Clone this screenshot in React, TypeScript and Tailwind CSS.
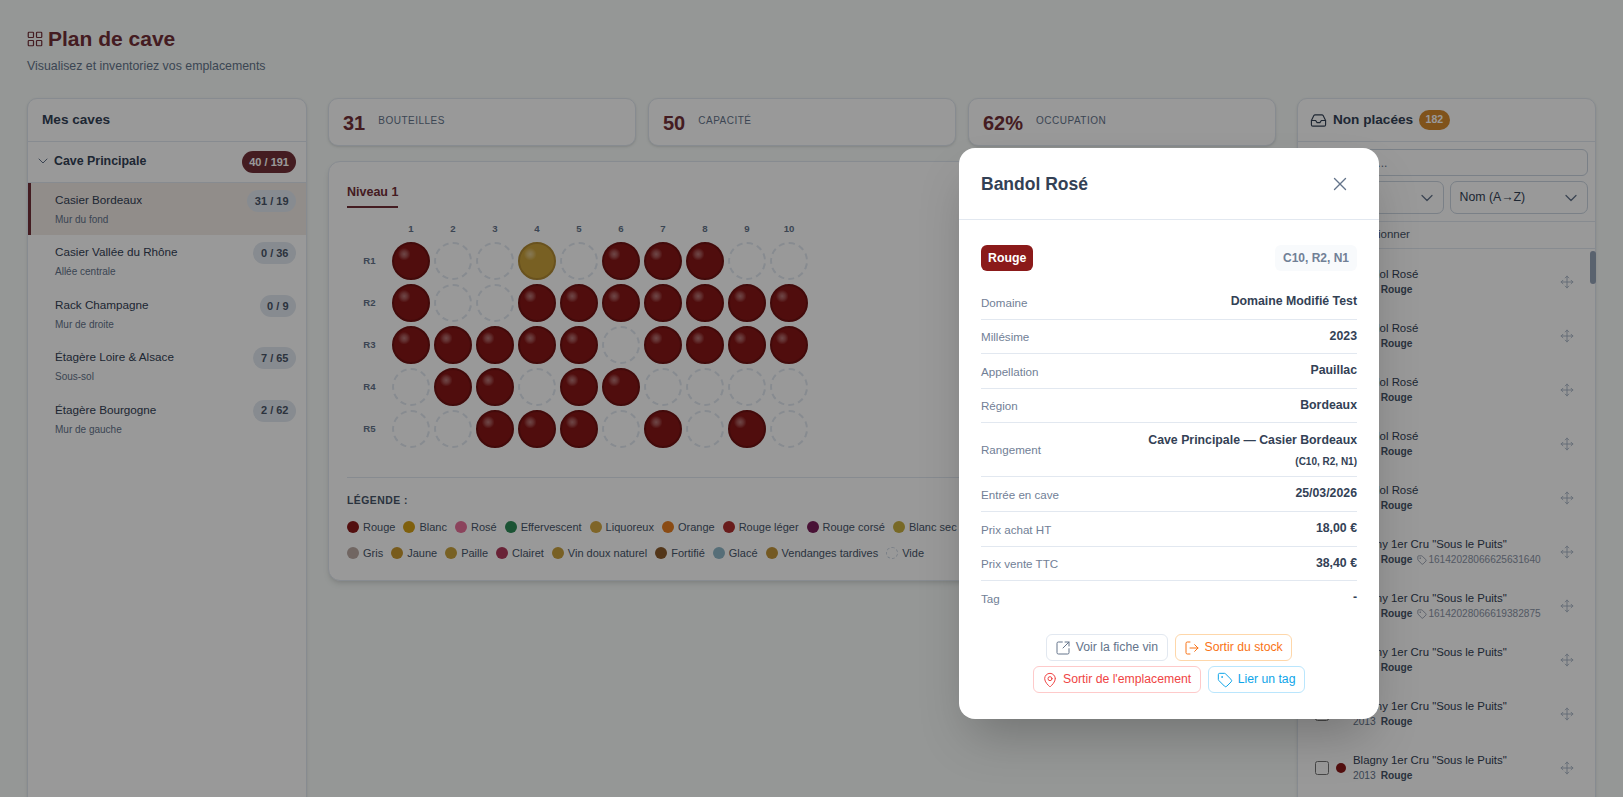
import {
  ChevronDown,
  Inbox,
  LayoutGrid,
  LogOut,
  MapPin,
  Move,
  SquareArrowOutUpRight,
  Tag,
  X,
} from "lucide-react";

const racks = [
  { name: "Casier Bordeaux", place: "Mur du fond", count: "31 / 19", active: true },
  { name: "Casier Vallée du Rhône", place: "Allée centrale", count: "0 / 36" },
  { name: "Rack Champagne", place: "Mur de droite", count: "0 / 9" },
  { name: "Étagère Loire & Alsace", place: "Sous-sol", count: "7 / 65" },
  { name: "Étagère Bourgogne", place: "Mur de gauche", count: "2 / 62" },
];

const rows = ["X..G.XXX..", "X..XXXXXXX", "XXXXX.XXXX", ".XX.XX....", "..XXX.X.X."];

const legendOne = [
  { label: "Rouge", color: "bg-[#8b1a1a]" },
  { label: "Blanc", color: "bg-[#d4a017]" },
  { label: "Rosé", color: "bg-[#e8709a]" },
  { label: "Effervescent", color: "bg-[#2e8b57]" },
  { label: "Liquoreux", color: "bg-[#d4a843]" },
  { label: "Orange", color: "bg-[#e67e22]" },
  { label: "Rouge léger", color: "bg-[#b03030]" },
  { label: "Rouge corsé", color: "bg-[#7b1e5a]" },
  { label: "Blanc sec", color: "bg-[#c8b040]" },
];

const legendTwo = [
  { label: "Gris", color: "bg-[#bcaaa4]" },
  { label: "Jaune", color: "bg-[#c9982f]" },
  { label: "Paille", color: "bg-[#c9a23c]" },
  { label: "Clairet", color: "bg-[#b03a5b]" },
  { label: "Vin doux naturel", color: "bg-[#c9a03c]" },
  { label: "Fortifié", color: "bg-[#8b5a2b]" },
  { label: "Glacé", color: "bg-[#8fb8c8]" },
  { label: "Vendanges tardives", color: "bg-[#c2953a]" },
];

const details = [
  { label: "Domaine", value: "Domaine Modifié Test" },
  { label: "Millésime", value: "2023" },
  { label: "Appellation", value: "Pauillac" },
  { label: "Région", value: "Bordeaux" },
];

const prices = [
  { label: "Entrée en cave", value: "25/03/2026" },
  { label: "Prix achat HT", value: "18,00 €" },
  { label: "Prix vente TTC", value: "38,40 €" },
];

const bottles = [
  { name: "Bandol Rosé", year: "2023" },
  { name: "Bandol Rosé", year: "2023" },
  { name: "Bandol Rosé", year: "2023" },
  { name: "Bandol Rosé", year: "2023" },
  { name: "Bandol Rosé", year: "2023" },
  { name: 'Blagny 1er Cru "Sous le Puits"', year: "2013", tag: "16142028066625631640" },
  { name: 'Blagny 1er Cru "Sous le Puits"', year: "2013", tag: "16142028066619382875" },
  { name: 'Blagny 1er Cru "Sous le Puits"', year: "2013" },
  { name: 'Blagny 1er Cru "Sous le Puits"', year: "2013" },
  { name: 'Blagny 1er Cru "Sous le Puits"', year: "2013" },
];

function Stat({ value, label }: { value: string; label: string }) {
  return (
    <div className="flex-1 h-[48px] bg-white border border-[#e2e8f0] rounded-[10px] shadow-sm flex items-center gap-[13px] px-[14px]">
      <span className="pt-[1px] text-[20px] font-bold text-[#722f37]">{value}</span>
      <span className="text-[10px] tracking-[0.5px] uppercase text-[#64748b] -mt-[3px]">{label}</span>
    </div>
  );
}

function Cell({ kind }: { kind: string }) {
  if (kind === ".") {
    return <div className="w-[38px] h-[38px] rounded-full border-2 border-dashed border-[#e2e8f0]" />;
  }
  const color = kind === "G" ? "bg-[#c9a13b] border-[#af8932]" : "bg-[#851616] border-[#6e1212]";
  return (
    <div
      className={`w-[38px] h-[38px] rounded-full border-2 ${color} bg-[radial-gradient(circle_at_30%_30%,rgba(255,255,255,0.42)_0%,rgba(255,255,255,0.26)_9%,rgba(255,255,255,0)_19%)]`}
    />
  );
}

function LegendRow({ items, empty }: { items: { label: string; color: string }[]; empty?: boolean }) {
  return (
    <div className="flex items-center gap-2 h-[26px] whitespace-nowrap">
      {items.map((item) => (
        <span key={item.label} className="flex items-center gap-1 text-[11px] text-[#475569]">
          <span className={`w-3 h-3 rounded-full ${item.color}`} />
          {item.label}
        </span>
      ))}
      {empty && (
        <span className="flex items-center gap-1 text-[11px] text-[#475569]">
          <span className="w-3 h-3 rounded-full border border-dashed border-[#cbd5e1]" />
          Vide
        </span>
      )}
    </div>
  );
}

function Row({ label, value }: { label: string; value: string }) {
  return (
    <div className="h-[34.6px] flex items-center justify-between border-b border-[#e2e8f0]">
      <span className="text-[11.6px] text-[#718096] pt-[1px]">{label}</span>
      <span className="pb-[1px] text-[12.32px] font-bold text-[#334155]">{value}</span>
    </div>
  );
}

function ModalButton({ className, icon, label }: { className: string; icon: React.ReactNode; label: string }) {
  return (
    <button className={`h-[27px] flex items-center gap-[5px] pl-[8px] pr-[8.5px] border rounded-[6px] text-[12.24px] ${className}`}>
      {icon}
      {label}
    </button>
  );
}

export default function App() {
  return (
    <div className="relative h-screen overflow-hidden bg-[#f8fcfa] font-['Liberation_Sans',Arial,sans-serif]">
      <div className="px-[27px] pt-[26px]">
        <div className="flex items-center gap-[4.5px]">
          <LayoutGrid size={18} strokeWidth={1.6} className="-ml-[1.5px] text-[#722f37]" />
          <h1 className="text-[21px] leading-[26px] font-bold text-[#722f37]">Plan de cave</h1>
        </div>
        <p className="mt-[7px] text-[12.35px] leading-[15px] text-[#64748b]">Visualisez et inventoriez vos emplacements</p>

        <div className="mt-[24px] grid grid-cols-[280px_1fr_299px] gap-[21px]">
          {/* caves */}
          <aside className="h-[760px] bg-white border border-[#e2e8f0] rounded-[10px] shadow-sm">
            <div className="h-[43px] flex items-center px-[14px] border-b border-[#e2e8f0]">
              <h2 className="pt-[1px] text-[13.6px] font-bold text-[#334155]">Mes caves</h2>
            </div>
            <div className="h-[41px] flex items-center justify-between pl-[7px] pr-[10px] border-b border-[#e2e8f0]">
              <div className="flex items-center gap-[3px] -mt-[1px]">
                <ChevronDown size={16} strokeWidth={1.5} className="text-[#64748b]" />
                <span className="text-[12.4px] font-bold text-[#334155]">Cave Principale</span>
              </div>
              <span className="h-[22px] px-[7px] flex items-center rounded-full bg-[#722f37] text-white text-[11px] font-bold">40 / 191</span>
            </div>
            {racks.map((rack) => (
              <div
                key={rack.name}
                className={`h-[52.4px] flex justify-between pr-[10px] pt-[7px] border-l-[3px] ${rack.active ? "border-[#722f37] bg-[#f2ebe7]" : "border-transparent"}`}
              >
                <div className="pl-[24px] pt-[2px]">
                  <div className="text-[11.7px] leading-[16px] text-[#334155]">{rack.name}</div>
                  <div className="mt-[6px] text-[10px] leading-[12px] text-[#64748b]">{rack.place}</div>
                </div>
                <span className="h-[22px] px-[7.5px] flex items-center rounded-full bg-[#e2e8f0] text-[#4a5568] text-[11px] font-bold">{rack.count}</span>
              </div>
            ))}
          </aside>

          {/* plan */}
          <main>
            <div className="flex gap-3">
              <Stat value="31" label="Bouteilles" />
              <Stat value="50" label="Capacité" />
              <Stat value="62%" label="Occupation" />
            </div>
            <section className="mt-[15px] h-[420px] bg-white border border-[#e2e8f0] rounded-[12px] shadow-md px-[18px] pt-[17px]">
              <div className="inline-block pb-[6px] border-b-2 border-[#722f37] text-[12.5px] leading-[16px] font-bold text-[#722f37]">Niveau 1</div>
              <div className="mt-[14px] flex pl-[45px] gap-1">
                {Array.from({ length: 10 }, (_, i) => (
                  <div key={i} className="w-[38px] h-[13px] text-center text-[9.6px] leading-[13px] font-bold text-[#64748b]">{i + 1}</div>
                ))}
              </div>
              <div className="flex flex-col gap-1 mt-[7px]">
                {rows.map((row, r) => (
                  <div key={r} className="flex items-center">
                    <div className="w-[45px] text-center text-[9.6px] font-bold text-[#64748b]">R{r + 1}</div>
                    <div className="flex gap-1">
                      {row.split("").map((kind, c) => (
                        <Cell key={c} kind={kind} />
                      ))}
                    </div>
                  </div>
                ))}
              </div>
              <div className="mt-[29px] pt-[16px] border-t border-[#e2e8f0]">
                <div className="text-[10.4px] leading-[13px] font-bold uppercase tracking-[0.5px] text-[#475569]">Légende :</div>
                <div className="mt-[7px]">
                  <LegendRow items={legendOne} />
                  <LegendRow items={legendTwo} empty />
                </div>
              </div>
            </section>
          </main>

          {/* non placees */}
          <aside className="h-[760px] bg-white border border-[#e2e8f0] rounded-[10px] shadow-sm relative">
            <div className="h-[43px] flex items-center gap-[6px] px-[12px] border-b border-[#e2e8f0]">
              <Inbox size={17} strokeWidth={1.6} className="text-[#334155]" />
              <h2 className="pt-[1px] text-[13.6px] font-bold text-[#334155]">Non placées</h2>
              <span className="h-[20px] px-[6.5px] flex items-center rounded-full bg-[#d68a2e] text-white text-[10.5px] font-bold">182</span>
            </div>
            <div className="px-[7px] py-[7px] border-b border-[#e2e8f0] flex flex-col gap-[5px]">
              <div className="h-[27px] flex items-center px-[10px] border border-[#cbd5e1] rounded-[6px] text-[12px] text-[#64748b]">Rechercher...</div>
              <div className="flex gap-[6px]">
                <div className="flex-1 h-[33px] flex items-center justify-between pl-[9px] pr-[6px] border border-[#cbd5e1] rounded-[7px] text-[12.3px] text-[#334155]">
                  Tous
                  <ChevronDown size={20} strokeWidth={1.5} className="text-[#64748b]" />
                </div>
                <div className="flex-1 h-[33px] flex items-center justify-between pl-[9px] pr-[6px] border border-[#cbd5e1] rounded-[7px] text-[12.3px] text-[#334155]">
                  Nom (A→Z)
                  <ChevronDown size={20} strokeWidth={1.5} className="text-[#64748b]" />
                </div>
              </div>
            </div>
            <div className="h-[27px] flex items-center gap-[17px] pl-[17px] border-b border-[#e2e8f0] text-[11.5px] text-[#475569]">
              <input type="checkbox" className="w-[14px] h-[14px]" />
              Sélectionner
            </div>
            <div className="pt-[6px] pb-[6px]">
              {bottles.map((bottle, i) => (
                <div key={i} className="h-[54px] flex items-center pl-[17px] pr-[21px]">
                  <input type="checkbox" className="w-[14px] h-[14px]" />
                  <span className="ml-[6.5px] w-[10px] h-[10px] rounded-full bg-[#8b1a1a]" />
                  <div className="ml-[7.5px] flex-1">
                    <div className="text-[11.4px] leading-[16px] -mt-[0.5px] mb-[0.5px] text-[#334155]">{bottle.name}</div>
                    <div className="flex items-center gap-[5px] text-[10.2px] leading-[16px] text-[#64748b]">
                      {bottle.year}
                      <span className="font-bold text-[#475569]">Rouge</span>
                      {bottle.tag && (
                        <span className="flex items-center gap-[1px] text-[10.1px] text-[#8a94a6]">
                          <Tag size={10} />
                          {bottle.tag}
                        </span>
                      )}
                    </div>
                  </div>
                  <Move size={14} strokeWidth={1.5} className="mb-[1px] text-[#a0aec0]" />
                </div>
              ))}
            </div>
            <div className="absolute -right-[1px] top-[152px] w-[6px] h-[33px] rounded-full bg-[#94a3b8]" />
          </aside>
        </div>
      </div>

      {/* backdrop + dialog */}
      <div className="absolute inset-0 bg-black/40" />
      <div className="absolute left-[959px] top-[148px] w-[420px] bg-white rounded-[16px] shadow-2xl">
        <div className="h-[72px] flex items-center justify-between pl-[22px] pr-[28px] border-b border-[#e2e8f0]">
          <h3 className="pt-[1px] text-[17.5px] font-bold text-[#334155]">Bandol Rosé</h3>
          <X size={22} strokeWidth={1.5} className="text-[#64748b]" />
        </div>
        <div className="px-[22px] pt-[25px]">
          <div className="flex items-center justify-between mb-[14px]">
            <span className="h-[26px] px-[7px] flex items-center rounded-[6px] bg-[#8b1a1a] text-white text-[12.3px] font-bold">Rouge</span>
            <span className="h-[26px] px-[8px] flex items-center rounded-[6px] bg-[#f8fafc] text-[#718096] text-[12px] font-bold">C10, R2, N1</span>
          </div>
          {details.map((row) => (
            <Row key={row.label} {...row} />
          ))}
          <div className="h-[54px] flex items-center justify-between border-b border-[#e2e8f0]">
            <span className="text-[11.6px] text-[#718096]">Rangement</span>
            <span className="pt-[2px] text-right text-[12.32px] leading-[21px] font-bold text-[#334155]">
              Cave Principale — Casier Bordeaux
              <br />
              <span className="text-[10px]">(C10, R2, N1)</span>
            </span>
          </div>
          {prices.map((row) => (
            <Row key={row.label} {...row} />
          ))}
          <div className="h-[34px] flex items-center justify-between">
            <span className="text-[11.6px] text-[#718096] pt-[1px]">Tag</span>
            <span className="pb-[1px] text-[12.32px] font-bold text-[#334155]">-</span>
          </div>
          <div className="mt-[19px] pb-[26px] flex flex-col items-center gap-[5px]">
            <div className="flex gap-[7px]">
              <ModalButton className="border-[#e2e8f0] text-[#64748b]" icon={<SquareArrowOutUpRight size={16} strokeWidth={1.5} />} label="Voir la fiche vin" />
              <ModalButton className="border-[#fed7aa] text-[#f97316]" icon={<LogOut size={16} strokeWidth={1.5} />} label="Sortir du stock" />
            </div>
            <div className="flex gap-[7px]">
              <ModalButton className="border-[#fecaca] text-[#ef4444]" icon={<MapPin size={16} strokeWidth={1.5} />} label="Sortir de l'emplacement" />
              <ModalButton className="border-[#bae6fd] text-[#0ea5e9]" icon={<Tag size={16} strokeWidth={1.5} />} label="Lier un tag" />
            </div>
          </div>
        </div>
      </div>
    </div>
  );
}
